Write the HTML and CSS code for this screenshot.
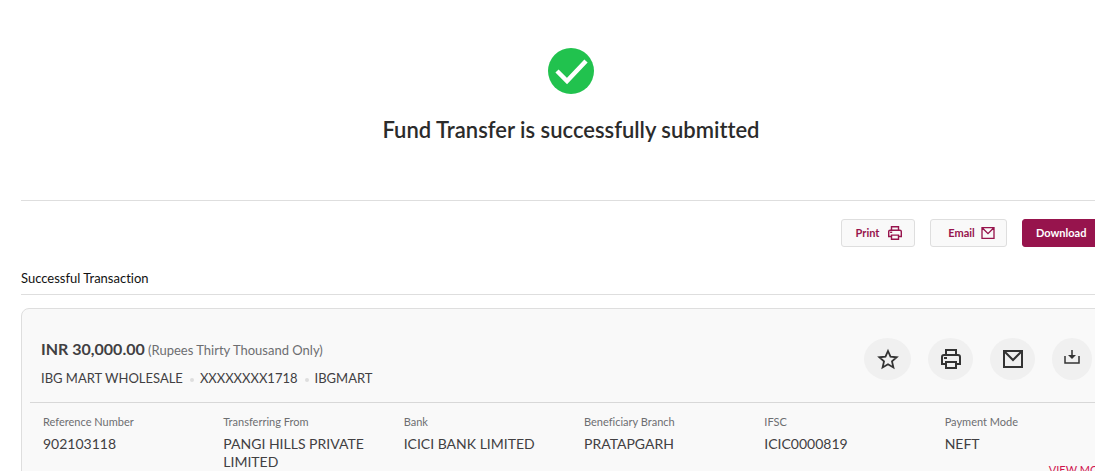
FILE: index.html
```
<!DOCTYPE html>
<html lang="en">
<head>
  <meta charset="UTF-8">
  <meta name="viewport" content="width=device-width, initial-scale=1.0">
  <title>Fund Transfer</title>
  <link rel="stylesheet" href="styles.css">
</head>
<body>

<!-- shared icons -->
<svg class="sprite" aria-hidden="true">
  <symbol id="icon-print" viewBox="0 0 20 20">
    <path d="M5 6V1h10v5M5 15H1V8a2 2 0 0 1 2-2h14a2 2 0 0 1 2 2v7h-4M5 13h10v6H5z" fill="none" stroke="currentColor" stroke-width="2"/>
    <path d="M3 8h3v2H3z" fill="currentColor"/>
  </symbol>
  <symbol id="icon-mail" viewBox="0 0 20 18">
    <path d="M1 1h18v16H1zM2 2l8 8 8-8" fill="none" stroke="currentColor" stroke-width="2"/>
  </symbol>
</svg>

<main class="page">
  <section class="status">
    <svg class="status-icon" viewBox="0 0 46 46" aria-hidden="true">
      <circle cx="23" cy="23" r="23" fill="#21c24e"/>
      <path d="M9 23l10 10 19-20" fill="none" stroke="#fff" stroke-width="4.500"/>
    </svg>
    <h1>Fund Transfer is successfully submitted</h1>
  </section>

  <div class="actions">
    <button type="button" class="btn">Print <svg width="14" height="14"><use href="#icon-print"/></svg></button>
    <button type="button" class="btn btn-email">Email <svg width="14" height="12"><use href="#icon-mail"/></svg></button>
    <button type="button" class="btn btn-primary">Download</button>
  </div>

  <h2>Successful Transaction</h2>

  <section class="card">
    <div class="card-head">
      <div>
        <p class="amount"><strong>INR 30,000.00</strong> <span>(Rupees Thirty Thousand Only)</span></p>
        <ul class="payee">
          <li>IBG MART WHOLESALE</li>
          <li>XXXXXXXX1718</li>
          <li>IBGMART</li>
        </ul>
      </div>
      <div class="tools">
        <button type="button" class="tool tool-star" aria-label="Favourite">
          <svg width="22" height="22" viewBox="0 0 22 22"><path d="M11 3l2.500 5.700 6.200.6-4.700 4.100 1.400 6.100L11 16.300l-5.400 3.200L7 13.400 2.300 9.300l6.200-.6z" fill="none" stroke="currentColor" stroke-width="1.800"/></svg>
        </button>
        <button type="button" class="tool" aria-label="Print"><svg width="20" height="20"><use href="#icon-print"/></svg></button>
        <button type="button" class="tool" aria-label="Email"><svg width="20" height="18"><use href="#icon-mail"/></svg></button>
        <button type="button" class="tool tool-download" aria-label="Download">
          <svg width="16" height="14" viewBox="0 0 16 14"><path d="M1 6v7h14V6M8 0v8" fill="none" stroke="currentColor" stroke-width="1.500"/><path d="M4 5h8L8 9z" fill="currentColor"/></svg>
        </button>
      </div>
    </div>

    <div class="details">
      <dl><dt>Reference Number</dt><dd>902103118</dd></dl>
      <dl><dt>Transferring From</dt><dd>PANGI HILLS PRIVATE LIMITED</dd></dl>
      <dl><dt>Bank</dt><dd>ICICI BANK LIMITED</dd></dl>
      <dl><dt>Beneficiary Branch</dt><dd>PRATAPGARH</dd></dl>
      <dl><dt>IFSC</dt><dd>ICIC0000819</dd></dl>
      <div>
        <dl><dt>Payment Mode</dt><dd>NEFT</dd></dl>
        <a href="#" class="more">VIEW MORE</a>
      </div>
    </div>
  </section>
</main>

</body>
</html>
```
FILE: styles.css
```
* { box-sizing: border-box; }
body {
  margin: 0;
  background: #fff;
  color: #414042;
  font-family: Lato, "Open Sans", sans-serif;
  font-variant-ligatures: none;
  overflow: hidden;
}
h1, h2, p, ul, dl, dd { margin: 0; padding: 0; }
button { font-family: inherit; cursor: pointer; }
.sprite { display: none; }

/* the content column runs past the right edge of the window */
.page { margin: 0 -26px 0 21px; }

.status {
  display: flex;
  flex-direction: column;
  align-items: center;
  gap: 23px;
  padding: 48px 0 57px;
  border-bottom: 1px solid #dedede;
}
.status-icon { width: 46px; height: 46px; }
.status h1 { font-size: 22px; line-height: 26px; font-weight: 600; color: #2b2b2b; }

.actions {
  display: flex;
  justify-content: flex-end;
  gap: 15px;
  padding: 18px 10px 20px 0;
}
.btn {
  display: flex;
  align-items: center;
  justify-content: center;
  gap: 9px;
  width: 74px;
  height: 28px;
  padding: 0 0 1px 2px;
  border: 1px solid #dedede;
  border-radius: 3px;
  background: #f9f9f9;
  color: #97144d;
  font-size: 11px;
  font-weight: 700;
}
.btn-email { gap: 6px; width: 77px; padding-left: 6px; }
.btn-primary {
  justify-content: flex-start;
  width: 89px;
  padding-left: 13px;
  border-color: #97144d;
  background: #97144d;
  color: #fff;
}

h2 {
  padding-bottom: 5px;
  border-bottom: 1px solid #dedede;
  color: #111;
  font-size: 13px;
  line-height: 22px;
  font-weight: 400;
}

.card {
  margin-top: 13px;
  padding: 0 8px 24px;
  border: 1px solid #dedede;
  border-radius: 8px;
  background: #f9f9f9;
}
.card-head {
  display: flex;
  justify-content: space-between;
  padding: 29px 20px 15px 11px;
  border-bottom: 1px solid #d8d8d8;
}
.amount { line-height: 22px; font-size: 13px; color: #6d6e71; }
.amount strong { font-size: 16px; color: #414042; }
.payee {
  display: flex;
  margin-top: 8px;
  list-style: none;
  font-size: 13px;
  line-height: 18px;
}
.payee li { display: flex; align-items: center; }
.payee li + li::before {
  content: "";
  width: 4px;
  height: 4px;
  margin: 4px 6px 0 7px;
  border-radius: 50%;
  background: #dedede;
}

.tools { display: flex; align-items: flex-start; gap: 17px; }
.tool {
  display: flex;
  align-items: center;
  justify-content: center;
  width: 45px;
  height: 42px;
  padding: 0;
  border: 0;
  border-radius: 50%;
  background: #f0f0f0;
  color: #333;
}
.tool-star { width: 47px; }
.tool-download { width: 40px; padding-bottom: 4px; }

.details {
  display: grid;
  grid-template-columns: repeat(6, 1fr);
  padding-top: 10px;
}
.details > * { padding: 0 13px; }
.details > :last-child { padding-right: 0; }
.details dt { color: #6d6e71; font-size: 11px; line-height: 18px; }
.details dd { margin-top: 4px; font-size: 14px; line-height: 18px; }
.more {
  display: block;
  margin-top: 9px;
  color: #d0144f;
  font-size: 11px;
  line-height: 16px;
  text-align: right;
  text-decoration: none;
}
```
